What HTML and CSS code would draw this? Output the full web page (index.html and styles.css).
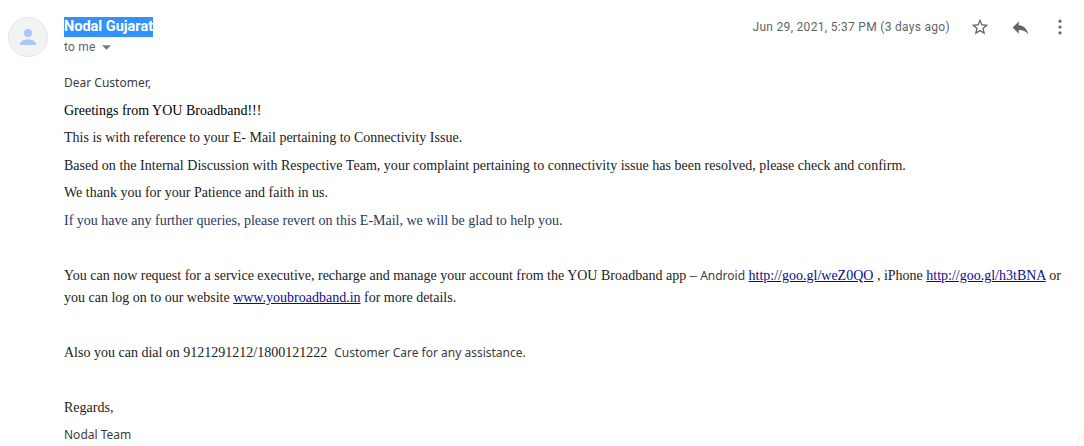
FILE: index.html
```html
<!DOCTYPE html>
<html lang="en">
<head>
<meta charset="utf-8">
<title>Nodal Gujarat</title>
<link rel="stylesheet" href="styles.css">
</head>
<body>
<main class="message">
  <div class="avatar">
    <svg viewBox="0 0 24 24" width="24" height="24"><circle cx="12" cy="8" r="4" fill="#a8c7fa"/><path d="M4 19c0-3.2 5-4.6 8-4.6s8 1.4 8 4.6v1H4z" fill="#a8c7fa"/></svg>
  </div>
  <div class="content">
    <header class="head">
      <div class="who">
        <div class="name"><span class="selected">Nodal Gujarat</span></div>
        <div class="to">to me <svg class="caret" viewBox="0 0 10 5" width="9" height="5"><path d="M0 0h10L5 5z" fill="#777"/></svg></div>
      </div>
      <div class="meta">
        <span class="date">Jun 29, 2021, 5:37 PM (3 days ago)</span>
        <svg class="icon star" viewBox="0 0 24 24" width="20" height="20"><path d="M22 9.24l-7.19-.62L12 2 9.19 8.63 2 9.24l5.46 4.73L5.82 21 12 17.27 18.18 21l-1.63-7.03L22 9.24zM12 15.4l-3.76 2.27 1-4.28-3.32-2.88 4.38-.38L12 6.1l1.71 4.04 4.38.38-3.32 2.88 1 4.28L12 15.4z" fill="#666"/></svg>
        <svg class="icon reply" viewBox="0 0 24 24" width="21" height="21"><path d="M10 9V5l-7 7 7 7v-4.1c5 0 8.5 1.6 11 5.1-1-5-4-10-11-11z" fill="#666"/></svg>
        <svg class="icon more" viewBox="0 0 24 24" width="20" height="20"><circle cx="12" cy="5" r="1.9" fill="#666"/><circle cx="12" cy="12" r="1.9" fill="#666"/><circle cx="12" cy="19" r="1.9" fill="#666"/></svg>
      </div>
    </header>
    <div class="body">
      <p class="line sans">Dear Customer,</p>
      <p class="line black">Greetings from YOU Broadband!!!</p>
      <p class="line">This is with reference to your E- Mail pertaining to Connectivity Issue.</p>
      <p class="line wide">Based on the Internal Discussion with Respective Team, your complaint pertaining to connectivity issue has been resolved, please check and confirm.</p>
      <p class="line">We thank you for your Patience and faith in us.</p>
      <p class="line navy">If you have any further queries, please revert on this E-Mail, we will be glad to help you.</p>
      <p class="line gap">You can now request for a service executive, recharge and manage your account from the YOU Broadband app – <span class="sans">Android</span> <a href="#">http://goo.gl/weZ0QO</a> , iPhone <a href="#">http://goo.gl/h3tBNA</a> or you can log on to our website <a href="#">www.youbroadband.in</a> for more details.</p>
      <p class="line gap">Also you can dial on 9121291212/1800121222 &nbsp;<span class="sans">Customer Care for any assistance.</span></p>
      <p class="line gap">Regards,</p>
      <p class="last sans">Nodal Team</p>
    </div>
  </div>
</main>
<div class="corner"><div class="corner-arc"></div></div>
</body>
</html>
```
FILE: styles.css
```css
html, body { margin: 0; height: 100%; overflow: hidden; background: #fff; }
body { position: relative; }
.message { display: flex; box-sizing: border-box; height: 446px; overflow: hidden; padding: 16px 14px 0 8px; gap: 16px; }
.avatar {
  width: 40px; height: 40px; border-radius: 50%; flex: none; box-sizing: border-box;
  background: #f1f3f4; border: 1px solid #e3e6ea;
  display: flex; align-items: center; justify-content: center; margin-top: 1px;
}
.content { flex: 1; min-width: 0; }
.head { display: flex; justify-content: space-between; height: 53.5px; }
.name { font: 700 14.5px/20px Roboto, sans-serif; color: #fff; margin-top: 1px; }
.selected { background: #3390ff; display: inline-block; }
.to { font: 12px/20px Roboto, sans-serif; letter-spacing: .2px; color: #5f6368; }
.caret { margin-left: 3px; vertical-align: middle; }
.meta { display: flex; align-items: center; height: 22px; }
.date { font: 12px/22px Roboto, sans-serif; letter-spacing: .3px; color: #5f6368; margin-right: 20px; }
.icon { flex: none; }
.reply { margin-left: 20px; }
.more { margin-left: 19px; }
.body { font: 14px/22px "Liberation Serif", serif; color: #222; }
.body p { margin: 0; }
.line { padding: 2.75px 0; }
.last { padding-top: 3.5px; line-height: 20px; }
.sans { font-family: "Noto Sans", sans-serif; font-size: 12px; color: #3c3c3c; }
.black { color: #000; }
.navy { color: #1f3864; }
.wide { letter-spacing: .02px; }
.body .gap { margin-top: 27.5px; }
a { color: #0b0b8f; }
.corner { position: absolute; right: 0; bottom: 0; width: 7px; height: 23px; overflow: hidden; }
.corner-arc { width: 46px; height: 46px; box-sizing: border-box; border-radius: 50%; border: 1px solid #f0f0f0; background: #fff; }
```
